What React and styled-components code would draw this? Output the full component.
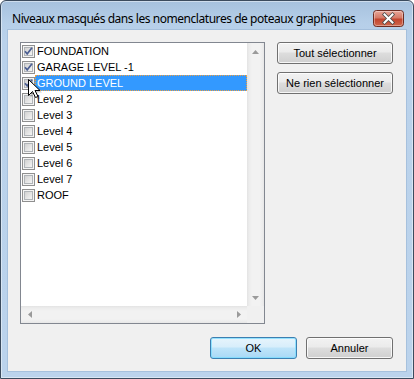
import React from "react";
import styled, { createGlobalStyle } from "styled-components";

const Global = createGlobalStyle`
  html, body { margin: 0; padding: 0; background: #ffffff; }
  #root { width: 414px; height: 379px; }
`;

const Window = styled.div`
  box-sizing: border-box;
  width: 414px;
  height: 379px;
  display: flex;
  flex-direction: column;
  border: 1px solid #3b4b5e;
  border-radius: 6px 6px 0 0;
  background: linear-gradient(#a6c1de 0px, #b6cfe9 22px, #bad2eb 40px, #bbd3ec 100%);
  box-shadow: inset 0 0 0 1px rgba(255, 255, 255, 0.45);
  padding: 0 7px 7px 7px;
  font-family: "Liberation Sans", Arial, sans-serif;
`;

const TitleBar = styled.div`
  height: 29px;
  display: flex;
  align-items: flex-start;
  padding-left: 4px;
  padding-right: 2px;
`;

const Title = styled.div`
  font-family: "Noto Sans", "Open Sans", sans-serif;
  font-size: 12px;
  line-height: 16px;
  margin-top: 10px;
  color: #000;
  white-space: nowrap;
  letter-spacing: -0.45px;
`;

const CloseButton = styled.div`
  margin-left: auto;
  margin-top: 9px;
  width: 31px;
  height: 17px;
  display: flex;
`;

const Client = styled.div`
  flex: 1;
  background: #f0f0f0;
  display: flex;
  flex-direction: column;
  padding: 12px 13px 12px 12px;
  box-shadow: 0 0 0 1px rgba(130, 160, 195, 0.35);
`;

const Main = styled.div`
  display: flex;
  gap: 12px;
  align-items: flex-start;
`;

const List = styled.div`
  position: relative;
  box-sizing: border-box;
  width: 245px;
  height: 282px;
  border: 1px solid #828790;
  background: #ffffff;
  display: grid;
  grid-template-columns: 1fr 17px;
  grid-template-rows: 1fr 17px;
`;

const Items = styled.div`
  display: flex;
  flex-direction: column;
  overflow: hidden;
`;

const Row = styled.div`
  height: 16px;
  display: flex;
  align-items: center;
  padding-left: 1px;
`;

const Label = styled.div`
  flex: 1;
  box-sizing: border-box;
  height: 16px;
  line-height: 14px;
  padding-left: 1px;
  font-size: 11px;
  white-space: nowrap;
  color: ${(p) => (p.$selected ? "#ffffff" : "#000000")};
  background: ${(p) => (p.$selected ? "#3399ff" : "transparent")};
  border: 1px ${(p) => (p.$selected ? "dotted #f0a040" : "solid transparent")};
`;

const VScroll = styled.div`
  grid-column: 2;
  grid-row: 1;
  display: flex;
  flex-direction: column;
  justify-content: space-between;
  background: linear-gradient(to right, #e3e3e3 0px, #ececec 2px, #f2f2f2 5px, #f2f2f2 13px, #ebebeb 16px, #e6e6e6 17px);
`;

const HScroll = styled.div`
  grid-column: 1;
  grid-row: 2;
  display: flex;
  justify-content: space-between;
  background: linear-gradient(#e3e3e3 0px, #ececec 2px, #f2f2f2 5px, #f2f2f2 13px, #ebebeb 16px, #e6e6e6 17px);
`;

const Corner = styled.div`
  grid-column: 2;
  grid-row: 2;
  background: #f0f0f0;
`;

const ArrowBox = styled.div`
  width: 17px;
  height: 17px;
  display: flex;
  align-items: center;
  justify-content: center;
`;

const Cursor = styled.svg`
  position: absolute;
  left: 7px;
  top: 36px;
  pointer-events: none;
`;

const Side = styled.div`
  display: flex;
  flex-direction: column;
  gap: 8px;
`;

const Button = styled.button`
  box-sizing: border-box;
  width: ${(p) => p.$w}px;
  height: 22px;
  padding: 0;
  margin: 0;
  border: 1px solid ${(p) => (p.$default ? "#3c7fb1" : "#707070")};
  border-radius: 3px;
  background: ${(p) =>
    p.$default
      ? "linear-gradient(#e6f4fc 0%, #d8eefb 45%, #bfe4f9 50%, #a9d9f6 100%)"
      : "linear-gradient(#f2f2f2 0%, #ebebeb 45%, #dddddd 50%, #cfcfcf 100%)"};
  box-shadow: inset 0 0 0 1px ${(p) => (p.$default ? "rgba(120,220,255,0.75)" : "rgba(255,255,255,0.8)")};
  font-family: "Liberation Sans", Arial, sans-serif;
  font-size: 11px;
  color: #000;
`;

const Footer = styled.div`
  margin-top: auto;
  display: flex;
  justify-content: flex-end;
  gap: 9px;
`;

const Check = ({ checked }) => (
  <svg width="13" height="13" viewBox="0 0 13 13" style={{ flex: "none" }}>
    <defs>
      <linearGradient id="cbg" x1="0" y1="0" x2="1" y2="1">
        <stop offset="0" stopColor="#cfcfcf" />
        <stop offset="1" stopColor="#f7f7f7" />
      </linearGradient>
    </defs>
    <rect x="0.5" y="0.5" width="12" height="12" fill="#f4f4f4" stroke="#8f8f8f" />
    <rect x="2.5" y="2.5" width="8" height="8" fill="url(#cbg)" stroke="#b0b4b8" />
    {checked && (
      <path d="M3 6.2 L5.2 8.8 L10 2.8" fill="none" stroke="#4c5f93" strokeWidth="1.7" />
    )}
  </svg>
);

const Tri = ({ dir }) => {
  const pts = {
    up: "0,4 7,4 3.5,0",
    down: "0,0 7,0 3.5,4",
    left: "4,0 4,7 0,3.5",
    right: "0,0 0,7 4,3.5",
  }[dir];
  const vertical = dir === "up" || dir === "down";
  return (
    <svg width={vertical ? 7 : 4} height={vertical ? 4 : 7}>
      <polygon points={pts} fill="#9a9a9a" />
    </svg>
  );
};

const items = [
  { label: "FOUNDATION", checked: true },
  { label: "GARAGE LEVEL -1", checked: true },
  { label: "GROUND LEVEL", checked: true, selected: true },
  { label: "Level 2" },
  { label: "Level 3" },
  { label: "Level 4" },
  { label: "Level 5" },
  { label: "Level 6" },
  { label: "Level 7" },
  { label: "ROOF" },
];

export default function App() {
  return (
    <>
      <Global />
      <Window>
        <TitleBar>
          <Title>Niveaux masqués dans les nomenclatures de poteaux graphiques</Title>
          <CloseButton>
            <svg width="31" height="17" viewBox="0 0 31 17">
              <defs>
                <linearGradient id="closeg" x1="0" y1="0" x2="0" y2="1">
                  <stop offset="0" stopColor="#e9a99c" />
                  <stop offset="0.45" stopColor="#d57a68" />
                  <stop offset="0.55" stopColor="#c2452f" />
                  <stop offset="1" stopColor="#d06a4f" />
                </linearGradient>
              </defs>
              <rect x="0.5" y="0.5" width="30" height="16" rx="3" fill="url(#closeg)" stroke="#6e2c22" />
              <rect x="1.5" y="1.5" width="28" height="14" rx="2" fill="none" stroke="rgba(255,255,255,0.35)" />
              <path d="M11.5 4.5 L19.5 12.5 M19.5 4.5 L11.5 12.5" stroke="#4a4a4a" strokeWidth="3.6" strokeLinecap="square" />
              <path d="M11.5 4.5 L19.5 12.5 M19.5 4.5 L11.5 12.5" stroke="#ffffff" strokeWidth="2" strokeLinecap="square" />
            </svg>
          </CloseButton>
        </TitleBar>
        <Client>
          <Main>
            <List>
              <Items>
                {items.map((it) => (
                  <Row key={it.label}>
                    <Check checked={it.checked} />
                    <Label $selected={it.selected}>{it.label}</Label>
                  </Row>
                ))}
              </Items>
              <VScroll>
                <ArrowBox><Tri dir="up" /></ArrowBox>
                <ArrowBox><Tri dir="down" /></ArrowBox>
              </VScroll>
              <HScroll>
                <ArrowBox><Tri dir="left" /></ArrowBox>
                <ArrowBox><Tri dir="right" /></ArrowBox>
              </HScroll>
              <Corner />
              <Cursor width="14" height="22" viewBox="0 0 14 22">
                <path d="M1.5 1.5 L1.5 17.5 L5.5 13.5 L8.5 19.5 L11 18.5 L8 12.5 L13 12.5 Z" fill="rgba(0,0,0,0.18)" transform="translate(1,1)" />
                <path d="M0.5 0.5 L0.5 16.5 L4.5 12.5 L7.5 18.5 L10 17.5 L7 11.5 L12 11.5 Z" fill="#ffffff" stroke="#000000" strokeWidth="1" strokeLinejoin="miter" />
              </Cursor>
            </List>
            <Side>
              <Button $w={116}>Tout sélectionner</Button>
              <Button $w={116}>Ne rien sélectionner</Button>
            </Side>
          </Main>
          <Footer>
            <Button $w={87} $default>OK</Button>
            <Button $w={87}>Annuler</Button>
          </Footer>
        </Client>
      </Window>
    </>
  );
}
